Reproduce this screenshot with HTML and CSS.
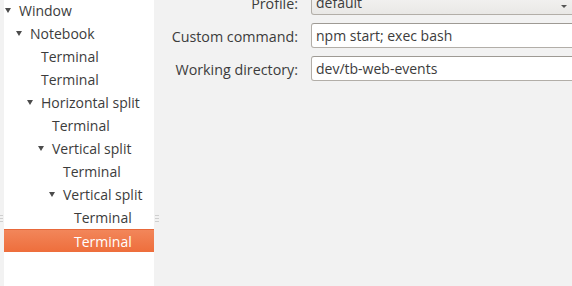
FILE: index.html
```html
<!DOCTYPE html>
<html>
<head>
<meta charset="utf-8">
<link rel="stylesheet" href="styles.css">
</head>
<body>
<div class="app">
  <div class="edge">
    <div class="grip"><i></i><i></i><i></i></div>
  </div>
  <div class="tree">
    <div class="row d0"><span class="exp open"></span><span>Window</span></div>
    <div class="row d1"><span class="exp open"></span><span>Notebook</span></div>
    <div class="row d2"><span class="exp"></span><span>Terminal</span></div>
    <div class="row d2"><span class="exp"></span><span>Terminal</span></div>
    <div class="row d2"><span class="exp open"></span><span>Horizontal split</span></div>
    <div class="row d3"><span class="exp"></span><span>Terminal</span></div>
    <div class="row d3"><span class="exp open"></span><span>Vertical split</span></div>
    <div class="row d4"><span class="exp"></span><span>Terminal</span></div>
    <div class="row d4"><span class="exp open"></span><span>Vertical split</span></div>
    <div class="row d5"><span class="exp"></span><span>Terminal</span></div>
    <div class="row d5 selected"><span class="exp"></span><span>Terminal</span></div>
  </div>
  <div class="pane-handle">
    <div class="grip"><i></i><i></i><i></i></div>
  </div>
  <div class="content">
    <div class="form">
      <label class="lbl">Profile:</label>
      <div class="combo"><span>default</span><span class="arrow"></span></div>
      <label class="lbl">Custom command:</label>
      <div class="entry">npm start; exec bash</div>
      <label class="lbl">Working directory:</label>
      <div class="entry">dev/tb-web-events</div>
    </div>
  </div>
</div>
</body>
</html>
```
FILE: styles.css
```css
* { box-sizing: border-box; }
html, body {
  margin: 0;
  padding: 0;
  width: 572px;
  height: 286px;
  overflow: hidden;
  background: #f2f2f2;
}
body {
  font-family: "Open Sans", "Noto Sans", sans-serif;
  font-size: 14px;
  color: #3c3c3c;
}
.app {
  display: flex;
  height: 286px;
}
.edge {
  width: 4px;
  background: #f2f2f2;
  padding-top: 215px;
}
.grip {
  display: flex;
  flex-direction: column;
  gap: 2px;
}
.grip i {
  display: block;
  height: 1px;
  background: #cfcfcf;
}
.edge .grip i { width: 3px; }
.tree {
  width: 150px;
  background: #ffffff;
  margin-top: -1px;
}
.row {
  height: 23px;
  display: flex;
  align-items: center;
  white-space: nowrap;
  line-height: 23px;
}
.d0 { padding-left: 0; }
.d1 { padding-left: 11px; }
.d2 { padding-left: 22px; }
.d3 { padding-left: 33px; }
.d4 { padding-left: 44px; }
.d5 { padding-left: 55px; }
.exp {
  width: 15px;
  flex: none;
  display: flex;
  align-items: center;
  padding-left: 1px;
}
.exp.open::before {
  content: "";
  display: block;
  width: 0;
  height: 0;
  border-left: 3px solid transparent;
  border-right: 3px solid transparent;
  border-top: 5px solid #4c4c4c;
  margin-top: -1px;
}
.selected {
  background: linear-gradient(#f2865a, #ee6e3c);
  color: #ffffff;
  border-top: 1px solid #e8683a;
}
.pane-handle {
  width: 6px;
  padding-top: 215px;
  padding-left: 1px;
}
.pane-handle .grip i { width: 4px; }
.content {
  flex: 1;
  padding-left: 10px;
}
.form {
  display: grid;
  grid-template-columns: 128px 1fr;
  grid-auto-rows: 25px;
  column-gap: 13px;
  row-gap: 8px;
  margin-top: -10px;
  margin-right: -10px;
}
.lbl {
  text-align: right;
  line-height: 25px;
  white-space: nowrap;
  padding-top: 1px;
  font-size: 14.3px;
}
.entry, .combo {
  border: 1px solid #b2aea8;
  border-top-color: #9e9a94;
  border-radius: 3px;
  background: #ffffff;
  padding: 0 5px 0 4px;
  line-height: 23px;
  white-space: nowrap;
}
.combo {
  background: linear-gradient(#f6f5f4, #e9e8e6);
  display: flex;
  justify-content: space-between;
  align-items: center;
  padding-right: 14px;
}
.arrow {
  width: 0;
  height: 0;
  border-left: 3px solid transparent;
  border-right: 3px solid transparent;
  border-top: 3px solid #555;
  position: relative;
  top: 4px;
}
```
